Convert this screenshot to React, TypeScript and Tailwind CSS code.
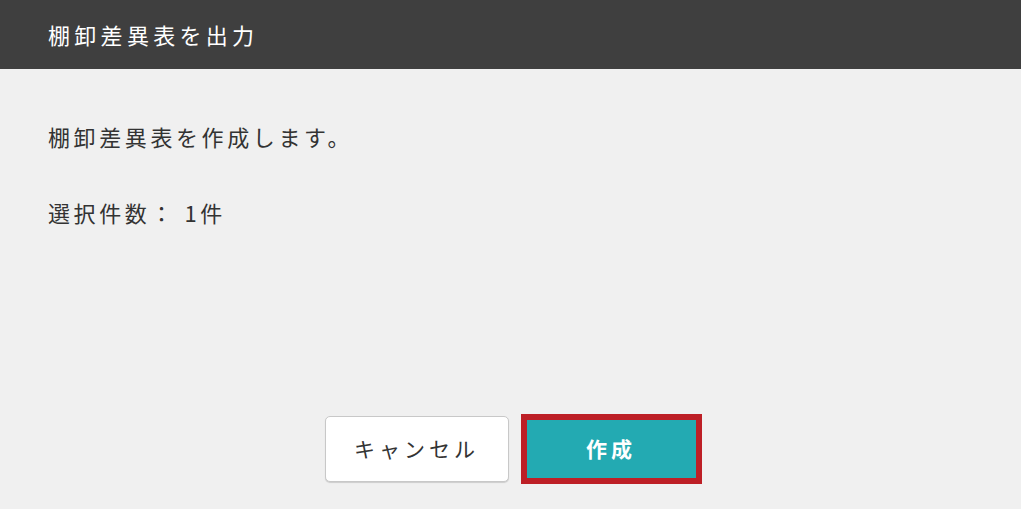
import React from "react";

const font = {
  fontFamily: '"Noto Sans CJK JP", "Noto Sans", sans-serif',
};

const App = () => {
  return (
    <div className="flex h-screen w-full flex-col bg-[#f0f0f0]" style={font}>
      <div className="flex h-[69px] items-center bg-[#3f3f3f] px-[48px]">
        <h1 className="text-[22px] font-normal tracking-[4.3px] text-white">
          棚卸差異表を出力
        </h1>
      </div>

      <div className="flex flex-1 flex-col px-[48px] pt-[51px] text-[#333333]">
        <p className="text-[22px] leading-[32px] tracking-[3.6px]">
          棚卸差異表を作成します。
        </p>
        <p className="mt-[44px] text-[22px] leading-[32px] tracking-[3.6px]">
          選択件数： 1件
        </p>
      </div>

      <div className="flex items-center justify-center gap-[12px] pb-[25px] pl-[5px]">
        <button className="flex h-[66px] w-[184px] items-center justify-center rounded-[5px] border border-[#c8c8c8] bg-white text-[21px] tracking-[4px] text-[#333333] shadow-[0_1px_1px_rgba(0,0,0,0.15)]">
          キャンセル
        </button>
        <div className="border-[6px] border-[#bd1f26]">
          <button className="flex h-[58px] w-[169px] items-center justify-center bg-[#23aab2] text-[21px] font-bold tracking-[4px] text-white">
            作成
          </button>
        </div>
      </div>
    </div>
  );
};

export default App;
